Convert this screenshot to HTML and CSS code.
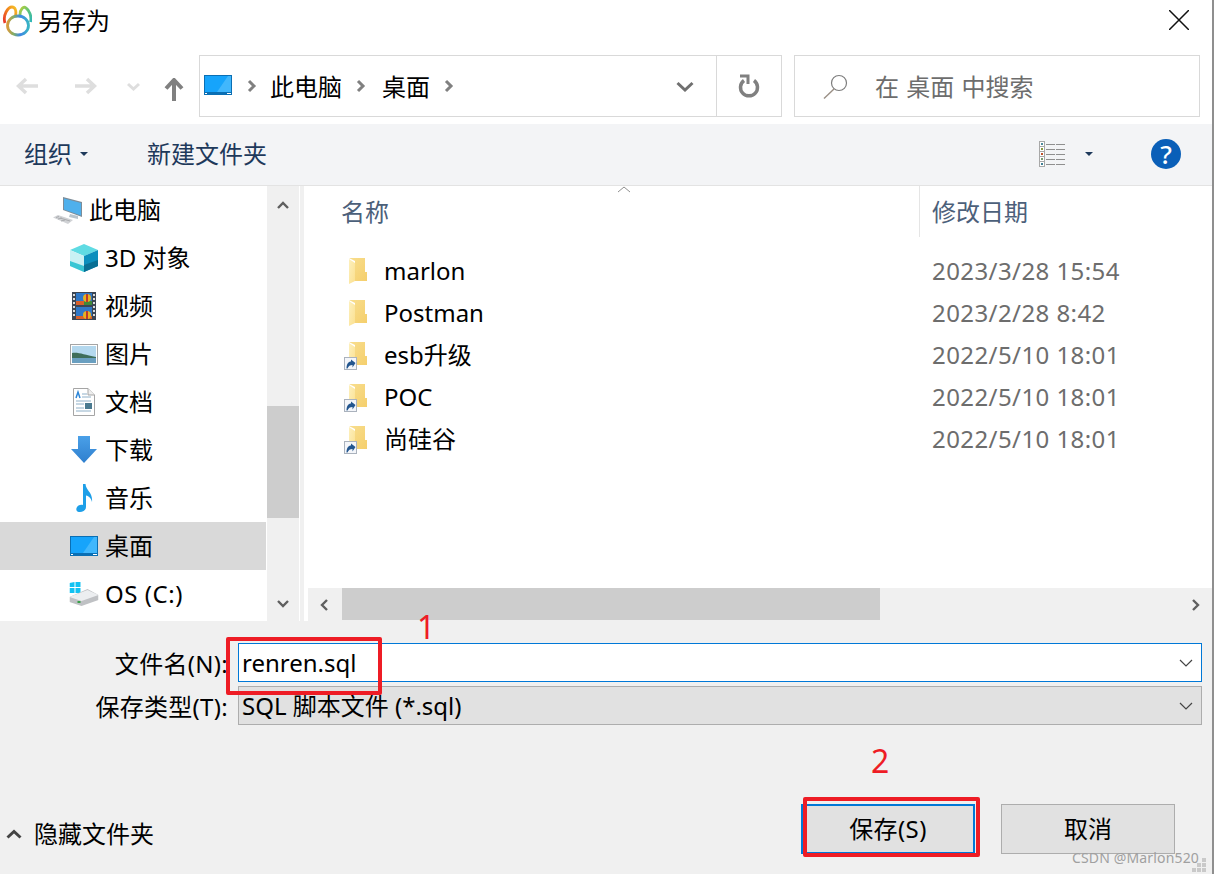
FILE: index.html
```html
<!DOCTYPE html>
<html lang="zh-CN">
<head>
<meta charset="utf-8">
<title>另存为</title>
<link rel="stylesheet" href="styles.css">
</head>
<body>
<svg class="defs" width="0" height="0" aria-hidden="true">
  <defs>
    <linearGradient id="fg" x1="0" x2="1" y1="0" y2="1"><stop offset="0" stop-color="#fdf0bd"/><stop offset="1" stop-color="#fbe08f"/></linearGradient>
    <linearGradient id="fb" x1="0" x2="1" y1="0" y2="1"><stop offset="0" stop-color="#f8de8e"/><stop offset="1" stop-color="#f5cf6d"/></linearGradient>
    <symbol id="folder" viewBox="0 0 20 28">
      <path d="M1 1H17V15H19V24H7V4Z" fill="url(#fb)"/>
      <path d="M1 2L7 6V24L1 27Z" fill="url(#fg)"/>
    </symbol>
    <symbol id="shortcut" viewBox="0 0 13 13">
      <rect x=".5" y=".5" width="12" height="12" fill="#f4f6fa" stroke="#aab2bd"/>
      <path d="M2.500 11.500C2.500 7 4.500 4.500 7 4.500V2.500L11.500 6L8.500 10.500V8C6 8 4.500 9 3.500 11.500Z" fill="#23568f"/>
    </symbol>
    <symbol id="desk" viewBox="0 0 28 20">
      <rect width="28" height="20" fill="#0a6fb4"/>
      <rect x="1" y="1" width="26" height="16" fill="#16a4fb"/>
      <path d="M13 17L24 1H27V17Z" fill="#41b7fc"/>
      <path d="M1 18.500H3M23 18.500H27" stroke="#fff"/>
    </symbol>
  </defs>
</svg>
<div class="dialog">
  <header class="titlebar">
    <svg class="app-icon" width="30" height="32" viewBox="2 5 30 32">
      <defs>
        <linearGradient id="lobeL" x1="0" x2="1" y1="1" y2="0"><stop offset="0" stop-color="#e8352a"/><stop offset=".6" stop-color="#f28a1c"/><stop offset="1" stop-color="#f5c22a"/></linearGradient>
        <linearGradient id="lobeR" x1="0" x2="1" y1="0" y2="1"><stop offset="0" stop-color="#b8cf3a"/><stop offset=".5" stop-color="#5cc47a"/><stop offset="1" stop-color="#2fb6b8"/></linearGradient>
        <linearGradient id="body" x1="0" x2="1" y1="0" y2="0"><stop offset="0" stop-color="#d89a3a"/><stop offset=".3" stop-color="#7fae6a"/><stop offset=".6" stop-color="#3e86e6"/><stop offset="1" stop-color="#38b4c4"/></linearGradient>
      </defs>
      <path d="M5 23C2.500 15 8 7 12 7C15.500 7 16.500 11 15.500 16" fill="none" stroke="url(#lobeL)" stroke-width="2.800"/>
      <path d="M20 15C20 9 23.500 6 26 8C29 10 32 16 30.500 22" fill="none" stroke="url(#lobeR)" stroke-width="2.800"/>
      <ellipse cx="18" cy="25.500" rx="10.500" ry="9.500" fill="none" stroke="url(#body)" stroke-width="2.800"/>
    </svg>
    <span class="title">另存为</span>
    <svg class="close" width="20" height="20" viewBox="0 0 20 20"><path d="M0 0L20 20M20 0L0 20" stroke="#111" stroke-width="1.500"/></svg>
  </header>

  <nav class="navbar">
    <div class="nav-buttons">
      <svg width="23" height="18" viewBox="0 0 23 18"><path d="M10 2L2.500 9L10 16M3 9H22" fill="none" stroke="#dedede" stroke-width="3.500"/></svg>
      <svg class="nav-fwd" width="23" height="18" viewBox="0 0 23 18"><path d="M13 2L20.500 9L13 16M20 9H1" fill="none" stroke="#dedede" stroke-width="3.500"/></svg>
      <svg class="nav-down" width="13" height="9" viewBox="0 0 13 9"><path d="M1 2L6.500 7L12 2" fill="none" stroke="#dedede" stroke-width="3"/></svg>
      <svg class="nav-up" width="20" height="23" viewBox="0 0 20 23"><path d="M2 10.500L10 2L18 10.500M10 3V23" fill="none" stroke="#808080" stroke-width="4"/></svg>
    </div>
    <div class="address">
      <svg class="addr-icon" width="28" height="20"><use href="#desk"/></svg>
      <svg class="crumb-sep" width="10" height="14" viewBox="0 0 10 14"><path d="M2 2L7 7L2 12" fill="none" stroke="#808080" stroke-width="3"/></svg>
      <span class="crumb">此电脑</span>
      <svg class="crumb-sep" width="10" height="14" viewBox="0 0 10 14"><path d="M2 2L7 7L2 12" fill="none" stroke="#808080" stroke-width="3"/></svg>
      <span class="crumb crumb-last">桌面</span>
      <svg class="crumb-sep" width="10" height="14" viewBox="0 0 10 14"><path d="M2 2L7 7L2 12" fill="none" stroke="#808080" stroke-width="3"/></svg>
      <svg class="addr-drop" width="18" height="11" viewBox="0 0 18 11"><path d="M1.500 2L9 9L16.500 2" fill="none" stroke="#707070" stroke-width="3"/></svg>
      <div class="refresh">
        <svg width="22" height="24" viewBox="0 0 22 24"><path d="M6 6.500A8.500 8.500 0 1 0 16 6.500" fill="none" stroke="#808080" stroke-width="3.500"/><path d="M2 2H10V10" fill="none" stroke="#808080" stroke-width="3"/></svg>
      </div>
    </div>
    <div class="search">
      <svg width="26" height="25" viewBox="0 0 26 25"><circle cx="16" cy="9" r="7.500" fill="none" stroke="#7d7d7d" stroke-width="1.200"/><path d="M11 15L1 24.500" stroke="#9a8f85" stroke-width="1.400"/></svg>
      <span class="search-text">在 桌面 中搜索</span>
    </div>
  </nav>

  <div class="toolbar">
    <span class="tool">组织</span>
    <i class="caret"></i>
    <span class="tool tool-new">新建文件夹</span>
    <svg class="views" width="28" height="26" viewBox="0 0 28 26">
      <g fill="#fff" stroke="#a8a8a8"><rect x=".5" y=".5" width="5" height="5"/><rect x=".5" y="5.500" width="5" height="5"/><rect x=".5" y="10.500" width="5" height="5"/><rect x=".5" y="15.500" width="5" height="5"/><rect x=".5" y="20.500" width="5" height="5"/></g>
      <g><rect x="2" y="2" width="2" height="2" fill="#4d8a9c"/><rect x="2" y="7" width="2" height="2" fill="#8a9a40"/><rect x="2" y="12" width="2" height="2" fill="#c0502a"/><rect x="2" y="17" width="2" height="2" fill="#7a9a70"/><rect x="2" y="22" width="2" height="2" fill="#3f7f95"/></g>
      <path d="M7 3.500H27M7 8.500H27M7 13.500H27M7 18.500H27M7 23.500H27" stroke="#8f8f8f" stroke-width="1" stroke-dasharray="9 1"/>
    </svg>
    <i class="caret caret-views"></i>
    <span class="help">?</span>
  </div>

  <main class="main">
    <aside class="sidebar">
      <ul class="tree">
        <li class="tree-item tree-root">
          <svg width="32" height="28" viewBox="0 0 32 28">
            <path d="M18 18L26 20V23L17 21Z" fill="#b9c4cc"/>
            <path d="M11 1L30 6V21L11 14Z" fill="#7d8c98"/>
            <path d="M12 2.500L29 7V19.500L12 13.500Z" fill="#4fb0ec"/>
            <path d="M1 21.500L6 19L21 24L16 28Z" fill="#d0d2d5"/>
            <path d="M4 21.500L7 20.500M6 23L10 22M9 25L13 24M8 22L18 25" stroke="#a9abae"/>
          </svg>
          <span>此电脑</span>
        </li>
        <li class="tree-item">
          <svg width="28" height="28" viewBox="0 0 28 28">
            <path d="M14 0L28 6L14 12L0 6Z" fill="#5fdbe3"/>
            <path d="M0 6L14 12V28L0 22Z" fill="#c9f1f4"/>
            <path d="M14 12L28 6V22L14 28Z" fill="#0b8fbd"/>
            <path d="M14 21L28 16V22L14 28Z" fill="#086f94"/>
            <path d="M0 17L14 22V28L0 22Z" fill="#39c6d4"/>
          </svg>
          <span>3D 对象</span>
        </li>
        <li class="tree-item">
          <svg width="24" height="28" viewBox="0 0 24 28">
            <rect width="24" height="28" fill="#3c4654"/>
            <rect x="4" y="1" width="16" height="12" fill="#2f78c8"/>
            <rect x="4" y="15" width="16" height="12" fill="#2f78c8"/>
            <rect x="4" y="9" width="8" height="4" fill="#d8602a"/>
            <rect x="12" y="9" width="8" height="4" fill="#3f8a3a"/>
            <rect x="4" y="24" width="16" height="3" fill="#d8602a"/>
            <circle cx="15" cy="6" r="4" fill="#e8b020"/><path d="M15 2V10" stroke="#c0392b" stroke-width="2"/>
            <circle cx="15" cy="23" r="4" fill="#e8b020"/><path d="M15 19V27" stroke="#c0392b" stroke-width="2"/>
            <path d="M1 3h2M1 7h2M1 11h2M1 15h2M1 19h2M1 23h2M21 3h2M21 7h2M21 11h2M21 15h2M21 19h2M21 23h2" stroke="#ddd" stroke-width="2"/>
          </svg>
          <span>视频</span>
        </li>
        <li class="tree-item">
          <svg width="28" height="21" viewBox="0 0 28 21">
            <rect x=".5" y=".5" width="27" height="20" fill="#fff" stroke="#a5a5a5"/>
            <rect x="2" y="2" width="24" height="17" fill="#b4d8ee"/>
            <path d="M2 9C9 8 14 11 26 13V15H2Z" fill="#3f6e5a"/>
            <rect x="2" y="14" width="24" height="5" fill="#6a9fc0"/>
          </svg>
          <span>图片</span>
        </li>
        <li class="tree-item">
          <svg width="22" height="28" viewBox="0 0 22 28">
            <path d="M.5.5H15L21.500 7V27.500H.5Z" fill="#fff" stroke="#a5a5a5"/>
            <path d="M15 .5V7H21.500" fill="#eee" stroke="#a5a5a5"/>
            <path d="M3 10L5 4L7 10" fill="none" stroke="#2d86d8" stroke-width="1.500"/>
            <path d="M9 6H14M9 9H18M3 13H18M3 16H11M3 20H11M3 23H18" stroke="#8fb0c8"/>
            <rect x="12" y="15" width="7" height="6" fill="#4a7a90"/>
          </svg>
          <span>文档</span>
        </li>
        <li class="tree-item">
          <svg width="28" height="28" viewBox="0 0 28 28">
            <defs><linearGradient id="dl" x1="0" x2="0" y1="0" y2="1"><stop offset="0" stop-color="#4aa0e8"/><stop offset="1" stop-color="#2f7fce"/></linearGradient></defs>
            <path d="M8 0H20V13H27L14 27L1 13H8Z" fill="url(#dl)"/>
          </svg>
          <span>下载</span>
        </li>
        <li class="tree-item">
          <svg width="22" height="30" viewBox="0 0 22 30">
            <path d="M10 1H12.500C13 8 20 9 19 19C18.500 16 16 13 13 12.500V24C13 27.500 9 29.500 6 29C2 28.500 3 24 5.500 22.500C7 21.500 9 21.500 10 22Z" fill="#1e9fe8"/>
          </svg>
          <span>音乐</span>
        </li>
        <li class="tree-item is-selected">
          <svg width="28" height="20"><use href="#desk"/></svg>
          <span>桌面</span>
        </li>
        <li class="tree-item">
          <svg width="29" height="24" viewBox="0 0 29 24">
            <path d="M0 1L5 0V5H0ZM6 0L11 0V5H6ZM0 6H5V11H0ZM6 6H11V11H6Z" fill="#12c2f2"/>
            <path d="M0 15L18 7L29 13V18L12 24L0 20Z" fill="#bfc1c4"/>
            <path d="M0 15L12 19L29 13L18 8Z" fill="#eceef0"/>
            <rect x="8" y="19" width="3" height="2" fill="#38a048"/>
          </svg>
          <span class="latin">OS (C:)</span>
        </li>
      </ul>
      <div class="vscroll">
        <svg class="sb-arrow" width="12" height="8" viewBox="0 0 12 8"><path d="M1 7L6 2L11 7" fill="none" stroke="#5f5f5f" stroke-width="2.400"/></svg>
        <div class="vtrack"><div class="vthumb"></div></div>
        <svg class="sb-arrow" width="12" height="8" viewBox="0 0 12 8"><path d="M1 1L6 6L11 1" fill="none" stroke="#5f5f5f" stroke-width="2.400"/></svg>
      </div>
    </aside>

    <section class="files">
      <div class="file-head">
        <span class="col col-name">名称</span>
        <svg class="sort" width="14" height="7" viewBox="0 0 14 7"><path d="M1 6L7 1L13 6" fill="none" stroke="#8f8f8f"/></svg>
        <span class="col col-date">修改日期</span>
      </div>
      <ul class="file-list">
        <li class="file"><span class="file-icon"><svg class="fd" width="20" height="28"><use href="#folder"/></svg></span><span class="file-name">marlon</span><span class="file-date">2023/3/28 15:54</span></li>
        <li class="file"><span class="file-icon"><svg class="fd" width="20" height="28"><use href="#folder"/></svg></span><span class="file-name">Postman</span><span class="file-date">2023/2/28 8:42</span></li>
        <li class="file"><span class="file-icon"><svg class="fd" width="20" height="28"><use href="#folder"/></svg><svg class="sc" width="13" height="13"><use href="#shortcut"/></svg></span><span class="file-name">esb升级</span><span class="file-date">2022/5/10 18:01</span></li>
        <li class="file"><span class="file-icon"><svg class="fd" width="20" height="28"><use href="#folder"/></svg><svg class="sc" width="13" height="13"><use href="#shortcut"/></svg></span><span class="file-name">POC</span><span class="file-date">2022/5/10 18:01</span></li>
        <li class="file"><span class="file-icon"><svg class="fd" width="20" height="28"><use href="#folder"/></svg><svg class="sc" width="13" height="13"><use href="#shortcut"/></svg></span><span class="file-name">尚硅谷</span><span class="file-date">2022/5/10 18:01</span></li>
      </ul>
      <div class="hscroll">
        <svg class="hs-arrow" width="8" height="12" viewBox="0 0 8 12"><path d="M7 1L2 6L7 11" fill="none" stroke="#5f5f5f" stroke-width="2.400"/></svg>
        <div class="htrack"><div class="hthumb"></div></div>
        <svg class="hs-arrow" width="8" height="12" viewBox="0 0 8 12"><path d="M1 1L6 6L1 11" fill="none" stroke="#5f5f5f" stroke-width="2.400"/></svg>
      </div>
    </section>
  </main>

  <footer class="panel">
    <div class="form">
      <label class="form-label">文件名(N):</label>
      <div class="field field-input"><span>renren.sql</span><svg width="14" height="8" viewBox="0 0 14 8"><path d="M1 1L7 7L13 1" fill="none" stroke="#444" stroke-width="1.200"/></svg></div>
      <label class="form-label">保存类型(T):</label>
      <div class="field field-select"><span>SQL 脚本文件 (*.sql)</span><svg width="14" height="8" viewBox="0 0 14 8"><path d="M1 1L7 7L13 1" fill="none" stroke="#444" stroke-width="1.200"/></svg></div>
    </div>
    <div class="actions">
      <div class="hide-folders">
        <svg width="16" height="10" viewBox="0 0 16 10"><path d="M1.500 8.500L8 2.500L14.500 8.500" fill="none" stroke="#444" stroke-width="3"/></svg>
        <span>隐藏文件夹</span>
      </div>
      <button class="btn btn-primary">保存(S)</button>
      <button class="btn btn-cancel">取消</button>
    </div>
  </footer>

  <div class="mark mark-1"></div>
  <div class="mark mark-2"></div>
  <span class="mark-num num-1">1</span>
  <span class="mark-num num-2">2</span>
  <span class="watermark">CSDN @Marlon520</span>
  <svg class="grip" width="16" height="16" viewBox="0 0 16 16"><path d="M11 0h4v4h-4zM6 5h4v4H6zM11 5h4v4h-4zM1 10h4v4H1zM6 10h4v4H6zM11 10h4v4h-4z" fill="#c9c9c9"/></svg>
</div>
</body>
</html>
```
FILE: styles.css
```css
* { box-sizing: border-box; }
html, body { margin: 0; padding: 0; }
body {
  width: 1214px;
  height: 874px;
  overflow: hidden;
  background: #fff;
  font-family: "Noto Sans", "Noto Sans CJK SC", sans-serif;
  font-size: 24px;
  line-height: 32px;
  color: #000;
}
.defs { position: absolute; }
ul { list-style: none; margin: 0; padding: 0; }
svg { display: block; flex: none; }

.dialog {
  position: relative;
  width: 1214px;
  height: 874px;
  display: flex;
  flex-direction: column;
  border-right: 2px solid #8f8f8f;
  overflow: hidden;
}

/* title */
.titlebar { height: 44px; display: flex; align-items: center; padding: 0 23px 2px 2px; }
.app-icon { margin-right: 6px; }
.title { font-size: 24px; }
.close { margin-left: auto; margin-top: -3px; }

/* navigation */
.navbar { height: 80px; display: flex; align-items: flex-start; padding: 11px 12px 0 0; }
.nav-buttons { width: 199px; height: 62px; display: flex; align-items: center; padding-left: 16px; flex: none; }
.nav-fwd { margin-left: 35px; }
.nav-down { margin-left: 30px; }
.nav-up { margin-left: 24px; margin-top: 6px; }
.address {
  width: 583px; height: 62px; flex: none;
  display: flex; align-items: center;
  border: 1px solid #d9d9d9;
  padding-left: 4px;
}
.addr-icon { margin-top: -2px; margin-right: 15px; }
.crumb { margin: 2px 14px 0 13px; font-size: 24px; }
.crumb-last { margin-left: 16px; }
.addr-drop { margin-left: auto; margin-right: 22px; }
.refresh {
  width: 65px; height: 60px;
  border-left: 1px solid #d9d9d9;
  display: flex; align-items: center; justify-content: center;
}
.search {
  margin-left: 12px; width: 406px; height: 62px; flex: none;
  display: flex; align-items: center;
  border: 1px solid #d9d9d9;
  padding-left: 28px;
}
.search-text { margin: 2px 0 0 26px; color: #6d6d6d; word-spacing: 1px; }

/* toolbar */
.toolbar {
  height: 62px;
  background: #f3f4f6;
  border-bottom: 1px solid #e3e3e3;
  display: flex; align-items: center;
  padding: 0 31px 2px 24px;
}
.tool { color: #1e395b; }
.tool-new { margin-left: 59px; }
.caret {
  width: 0; height: 0; margin-left: 8px;
  border-left: 4px solid transparent; border-right: 4px solid transparent;
  border-top: 4px solid #1e395b;
}
.views { margin-left: auto; transform: translateX(1px); }
.caret-views { margin-left: 19px; }
.help {
  width: 30px; height: 30px; margin-left: 58px;
  border-radius: 50%;
  background: #0a5fb8;
  color: #fff; font-size: 26px; line-height: 30px; font-weight: 500; text-align: center;
}

/* main */
.main { height: 435px; display: flex; }
.sidebar { width: 304px; flex: none; display: flex; border-right: 4px solid #f0f0f0; padding-right: 1px; }
.tree { width: 267px; flex: none; }
.tree-item {
  height: 48px; width: 266px;
  display: flex; align-items: center; gap: 7px;
  padding-left: 70px;
  position: relative;
}
.tree-item > svg { position: absolute; left: 84px; transform: translateX(-50%); }
.tree-item > span { margin-left: 35px; }
.tree-item > .latin { letter-spacing: .55px; }
.tree-root { padding-left: 54px; }
.tree-root > svg { left: 68px; }
.is-selected { background: #d9d9d9; }

.vscroll { width: 32px; background: #f0f0f0; display: flex; flex-direction: column; align-items: center; }
.sb-arrow { margin: 15px 0 12px; }
.sb-arrow:last-child { margin: 12px 0 13px; }
.vtrack { flex: 1; width: 100%; padding-top: 185px; }
.vthumb { height: 112px; background: #cdcdcd; }

.files { flex: 1; min-width: 0; display: flex; flex-direction: column; padding-left: 4px; }
.file-head { height: 51px; position: relative; display: flex; padding-left: 33px; color: #4c607a; }
.col { line-height: 52px; }
.col-date { margin-left: auto; width: 293px; padding-left: 12px; height: 51px; border-left: 1px solid #e5e5e5; }
.sort { position: absolute; left: 309px; top: 0; }
.file-list { flex: 1; padding-top: 13px; }
.file { height: 42px; display: flex; align-items: center; }
.file-icon { width: 76px; height: 28px; position: relative; flex: none; }
.fd { position: absolute; left: 40px; top: 0; }
.sc { position: absolute; left: 36px; top: 16px; }
.file-name { width: 548px; flex: none; }
.file-date { color: #6d6d6d; letter-spacing: .42px; }

.hscroll { height: 33px; background: #f0f0f0; display: flex; align-items: center; }
.hs-arrow { margin: 0 12px; }
.htrack { flex: 1; height: 100%; padding: 0 300px 0 2px; }
.hthumb { height: 32px; background: #cdcdcd; }

/* bottom */
.panel { flex: 1; background: #f0f0f0; padding-top: 22px; display: flex; flex-direction: column; }
.form { display: grid; grid-template-columns: 228px 964px; column-gap: 10px; row-gap: 4px; }
.form-label { text-align: right; line-height: 42px; height: 39px; letter-spacing: .3px; }
.field { height: 39px; display: flex; align-items: center; justify-content: space-between; padding: 0 8px 0 3px; }
.field-input { background: #fff; border: 1px solid #0078d7; }
.field-select { background: #e1e1e1; border: 1px solid #adadad; }
.actions { margin-top: 79px; display: flex; align-items: center; padding-left: 6px; }
.hide-folders { display: flex; align-items: center; gap: 12px; margin-right: auto; margin-top: 10px; }
.btn {
  width: 174px; height: 50px; padding: 0;
  font: inherit; color: #000;
  background: #e1e1e1; border: 1px solid #adadad;
}
.btn-primary { border: 2px solid #0078d7; letter-spacing: .4px; }
.btn-cancel { margin-left: 26px; margin-right: 37px; }

/* annotations over the dialog */
.mark { position: absolute; border: 4px solid #ee1c25; border-radius: 2px; }
.mark-1 { left: 226px; top: 637px; width: 156px; height: 58px; }
.mark-2 { left: 803px; top: 797px; width: 177px; height: 60px; }
.mark-num { position: absolute; color: #ee1c25; font-size: 32px; line-height: 36px; }
.num-1 { left: 417px; top: 609px; }
.num-2 { left: 871px; top: 743px; }
.watermark { position: absolute; left: 1072px; top: 849px; font-size: 14px; line-height: 18px; color: #a0a0a0; letter-spacing: .15px; }
.grip { position: absolute; left: 1191px; top: 858px; }
```
